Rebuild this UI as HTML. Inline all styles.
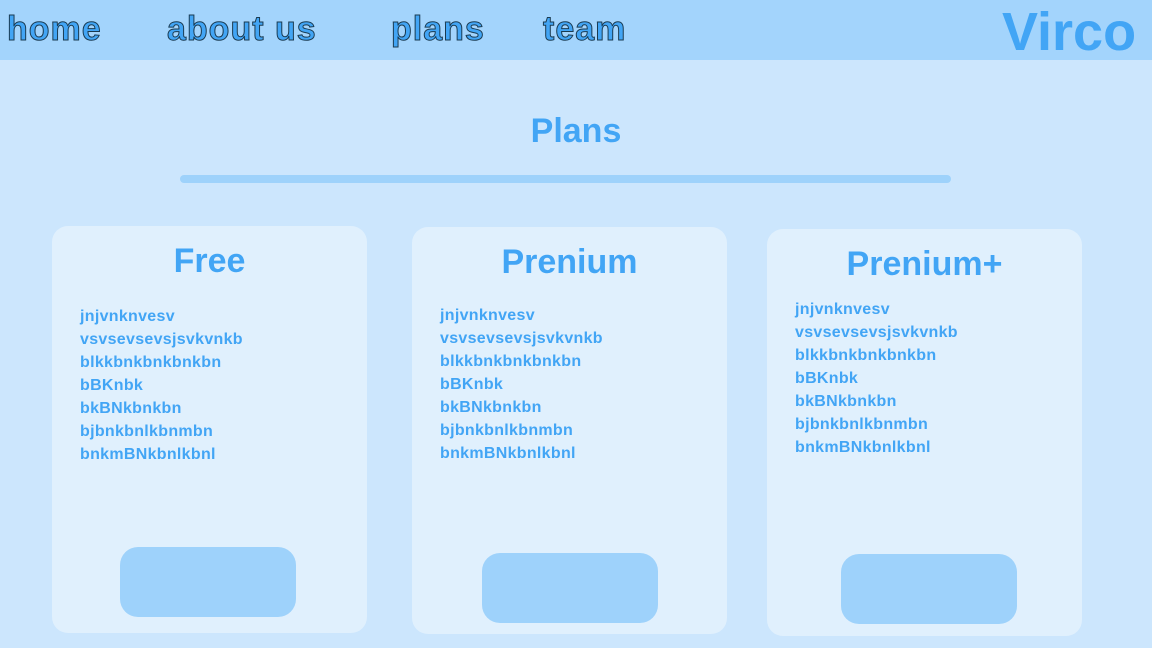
<!DOCTYPE html>
<html><head><style>
*{margin:0;padding:0;box-sizing:border-box}
body{width:1152px;height:648px;overflow:hidden;background:#cce6fd;font-family:"Liberation Sans",sans-serif;position:relative;color:#42a5f5;font-weight:bold}
.nav{position:absolute;left:0;top:0;width:1152px;height:60px;background:#a3d4fc}
.nav a{position:absolute;top:10px;font-size:34px;color:#42a5f5;-webkit-text-stroke:1px #1a3a50;letter-spacing:1px}
.logo{position:absolute;left:1002px;top:1px;font-size:54px;color:#42a5f5}
h1{position:absolute;left:0;width:1152px;top:112px;text-align:center;font-size:34px}
.bar{position:absolute;left:180px;top:175px;width:771px;height:8px;border-radius:4px;background:#9ed2fb}
.card{position:absolute;width:315px;height:407px;background:#e0f0fd;border-radius:16px}
.card h2{text-align:center;font-size:34px;margin-top:16px}
.card ul{list-style:none;position:absolute;left:28px;font-size:16px;line-height:23px;letter-spacing:0.3px}
.btn{position:absolute;width:176px;height:70px;background:#9ed2fb;border-radius:18px}
</style></head><body>
<div class="nav">
<a style="left:7px">home</a>
<a style="left:167px">about us</a>
<a style="left:391px">plans</a>
<a style="left:543px">team</a>
<div class="logo">Virco</div>
</div>
<h1>Plans</h1>
<div class="bar"></div>
<div class="card" style="left:52px;top:226px"><h2>Free</h2>
<ul style="top:79px"><li>jnjvnknvesv</li><li>vsvsevsevsjsvkvnkb</li><li>blkkbnkbnkbnkbn</li><li>bBKnbk</li><li>bkBNkbnkbn</li><li>bjbnkbnlkbnmbn</li><li>bnkmBNkbnlkbnl</li></ul>
<div class="btn" style="left:68px;top:321px"></div></div>
<div class="card" style="left:412px;top:227px"><h2>Prenium</h2>
<ul style="top:77px"><li>jnjvnknvesv</li><li>vsvsevsevsjsvkvnkb</li><li>blkkbnkbnkbnkbn</li><li>bBKnbk</li><li>bkBNkbnkbn</li><li>bjbnkbnlkbnmbn</li><li>bnkmBNkbnlkbnl</li></ul>
<div class="btn" style="left:70px;top:326px"></div></div>
<div class="card" style="left:767px;top:229px"><h2>Prenium+</h2>
<ul style="top:69px"><li>jnjvnknvesv</li><li>vsvsevsevsjsvkvnkb</li><li>blkkbnkbnkbnkbn</li><li>bBKnbk</li><li>bkBNkbnkbn</li><li>bjbnkbnlkbnmbn</li><li>bnkmBNkbnlkbnl</li></ul>
<div class="btn" style="left:74px;top:325px"></div></div>
</body></html>
